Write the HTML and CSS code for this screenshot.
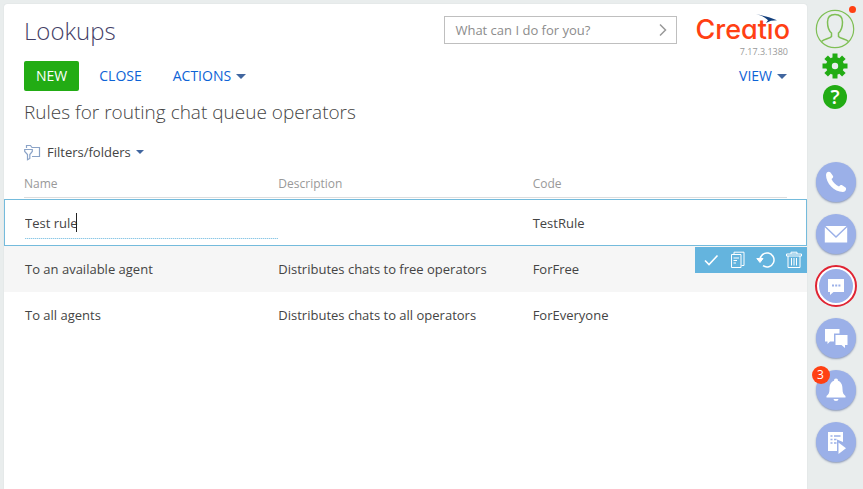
FILE: index.html
```html
<!DOCTYPE html>
<html lang="en">
<head>
<meta charset="utf-8">
<title>Lookups</title>
<link rel="stylesheet" href="styles.css">
</head>
<body>
<div class="app">
  <main class="card">
    <header class="top">
      <h1 class="title">Lookups</h1>
      <form class="command">
        <input class="command-input" type="text" placeholder="What can I do for you?" aria-label="Command line">
        <button class="command-go" type="button" aria-label="Run command">
          <svg width="10" height="14" viewBox="0 0 10 14"><path d="M2 1.5 7.5 7 2 12.5" fill="none" stroke="#999" stroke-width="1.5"/></svg>
        </button>
      </form>
      <div class="brand">
        <span class="logo">Creatio
          <svg class="bird" width="22" height="10" viewBox="0 0 22 10"><path d="M5 3H21V10H11Z" fill="#fff"/><path d="M0 0 13 3.2 21 6.2 15 6.8 10 9 12 6.2C9 3 6 2 0 0Z" fill="#123f7c"/></svg>
        </span>
        <span class="version">7.17.3.1380</span>
      </div>
    </header>
    <div class="toolbar">
      <button class="btn btn-new" type="button">NEW</button>
      <button class="btn" type="button">CLOSE</button>
      <button class="btn btn-actions" type="button">ACTIONS<span class="caret"></span></button>
      <button class="btn btn-view" type="button">VIEW<span class="caret"></span></button>
    </div>
    <h2 class="subtitle">Rules for routing chat queue operators</h2>
    <button class="filters" type="button">
      <svg width="17" height="17" viewBox="0 0 17 17" fill="none" stroke="#8ba3c7" stroke-width="1.2"><path d="M2.5 4V1.5H6.5L8 3.5H15.5V12.5H8"/><path d="M.7 5.5H8.3V7.5L5.8 10.5V14.5L3.5 15.8V10.5L.7 7.5Z" fill="#fff"/></svg>
      <span>Filters/folders</span><span class="caret"></span>
    </button>
    <table class="grid">
      <thead><tr><th>Name</th><th>Description</th><th>Code</th></tr></thead>
      <tbody>
        <tr class="editing">
          <td class="edit-cell"><input class="edit-input" type="text" value="Test rule" aria-label="Name"></td>
          <td></td>
          <td>TestRule
            <div class="row-actions">
              <button type="button" aria-label="Save"><svg width="18" height="18" viewBox="0 0 18 18"><path d="M3 9.5 7 13.5 15.5 4.5" stroke-width="1.6"/></svg></button>
              <button type="button" aria-label="Copy"><svg width="18" height="18" viewBox="0 0 18 18"><path d="M2.5 3.5H12V16.5H2.5ZM5 3V1.2H15V14.5H12.5M4.5 7H10M4.5 9.5H8M4.5 12H7"/></svg></button>
              <button type="button" aria-label="Undo"><svg width="20" height="18" viewBox="0 0 20 18"><path d="M4 9A7 7 0 1 1 7 14.7" stroke-width="1.5"/><path d="M.8 7.5H7L4 11.5Z" fill="#fff"/></svg></button>
              <button type="button" aria-label="Delete"><svg width="18" height="18" viewBox="0 0 18 18"><path d="M1.5 5V3H16.5V5ZM6 3V1.2H12V3M3 5V16.5H15V5M6.5 7V14.5M9 7V14.5M11.5 7V14.5"/></svg></button>
            </div>
          </td>
        </tr>
        <tr class="striped"><td>To an available agent</td><td>Distributes chats to free operators</td><td>ForFree</td></tr>
        <tr><td>To all agents</td><td>Distributes chats to all operators</td><td>ForEveryone</td></tr>
      </tbody>
    </table>
  </main>
  <aside class="side">
    <button class="plain avatar" type="button" aria-label="Profile">
      <svg width="40" height="40" viewBox="0 0 40 40" fill="none" stroke="#7fbf55" stroke-width="1.2"><circle cx="20" cy="20" r="18.7"/><path d="M6.5 32.5C9 30 15 29.5 16.5 27.5V24C13.5 21.5 12.5 17 12.5 13C12.5 8 15.5 5.5 20 5.5S27.500 8 27.500 13C27.500 17 26.500 21.500 23.500 24V27.500C25 29.500 31 30 33.500 32.500" stroke-width="1.500"/></svg>
      <span class="dot"></span>
    </button>
    <button class="plain gear" type="button" aria-label="Settings">
      <svg width="26" height="26" viewBox="-13 -13 26 26" fill="#22ac14"><g id="teeth"><path d="M-2.500-12.500H2.500V12.500H-2.500Z"/><path d="M-12.500-2.500H12.500V2.500H-12.500Z"/></g><use href="#teeth" transform="rotate(45)"/><circle r="9"/><circle r="3.200" fill="#e9eded"/></svg>
    </button>
    <button class="plain help" type="button" aria-label="Help">?</button>
    <nav class="channels">
      <button class="round" type="button" aria-label="Calls"><svg width="24" height="24" viewBox="0 0 24 24"><path d="M2 5C2 2 5 .8 6.500 2.500L9 6C9.500 7 9 8 7.500 9C9 12.500 12 15 15 16.500C16 15 17 14.500 18.200 15.200L21.500 17.500C23 18.800 21.500 22 19 22C10 22 2 13 2 5Z"/></svg></button>
      <button class="round" type="button" aria-label="Email"><svg width="24" height="24" viewBox="0 0 24 24"><path d="M1.500 4H22.500L12 14ZM.8 5.300 12 16 23.200 5.300V20.500H.8Z"/></svg></button>
      <button class="round ringed" type="button" aria-label="Chats"><svg width="24" height="24" viewBox="0 0 24 24"><path d="M4 5H20V18H9.500L6 21V18H4Z"/><path d="M8 10.500H10V12.500H8ZM11.200 10.500H13.200V12.500H11.200ZM14.400 10.500H16.400V12.500H14.400Z" fill="#9bb0e8"/></svg></button>
      <button class="round" type="button" aria-label="Feed"><svg width="26" height="24" viewBox="0 0 26 24"><path d="M2 3H16.500V7.500H11V15.500H7L4.500 18V15.500H2Z"/><path d="M12.500 9H24.500V19H22V22L18.500 19H12.500Z"/></svg></button>
      <button class="round" type="button" aria-label="Notifications"><svg width="24" height="26" viewBox="0 0 24 26"><path d="M12 1.500A2 2 0 0 1 14 3.700C17.500 5 18.500 8 18.500 12C18.500 16 19.500 17.500 21.500 19V20.500H2.500V19C4.500 17.500 5.500 16 5.500 12C5.500 8 6.500 5 10 3.700A2 2 0 0 1 12 1.500ZM9.500 22H14.500A2.500 2 0 0 1 9.500 22Z"/></svg><span class="badge">3</span></button>
      <button class="round" type="button" aria-label="Processes"><svg width="24" height="24" viewBox="0 0 24 24"><path d="M4 2H19V12L13 9.500V21H4Z"/><path d="M6.500 6H8.500M10 6H16.500M6.500 9.500H8.500M10 9.500H12.500M6.500 13H8.500M10 13H12.500" stroke="#9bb0e8" stroke-width="1.300"/><path d="M14.500 12.500 22 18.300 14.500 24Z"/></svg></button>
    </nav>
  </aside>
</div>
</body>
</html>
```
FILE: styles.css
```css
* { box-sizing: border-box; }
body {
  margin: 0;
  background: #e9eded;
  color: #444;
  font: 13px/20px "Open Sans", sans-serif;
}
button, input { font: inherit; color: inherit; border: 0; padding: 0; background: none; }
button { cursor: pointer; }
svg { display: block; flex: none; }
h1, h2 { margin: 0; font-weight: 300; }

.app { display: flex; min-height: 100vh; padding: 4px 0 0 4px; }
.card { flex: 1; min-width: 0; background: #fff; border-radius: 3px 3px 0 0; box-shadow: 0 0 1px #c4cacc; }

.top { display: flex; align-items: flex-start; height: 56px; padding: 10px 17px 0 20px; }
.title { font-size: 24px; line-height: 34px; color: #444066; }
.command { display: flex; align-items: center; width: 233px; height: 28px; margin: 2px 18px 0 auto; border: 1px solid #bfbfbf; }
.command-input { flex: 1; min-width: 0; height: 26px; padding-left: 10px; outline: 0; }
.command-input::placeholder { color: #8c8c8c; opacity: 1; }
.command-go { padding: 0 8px; }
.brand { display: flex; flex-direction: column; align-items: flex-end; }
.logo { position: relative; font: 500 27px/32px Inter, sans-serif; font-feature-settings: "cv11"; color: #ff4013; }
.bird { position: absolute; right: 12px; top: 0; }
.version { font-size: 9px; line-height: 12px; color: #999; padding-right: 2px; }

.toolbar { display: flex; align-items: center; padding: 0 20px; height: 32px; font-size: 14px; }
.btn { height: 30px; color: #0d63d6; display: flex; align-items: center; }
.btn-new { padding: 0 12px; margin-right: 20px; background: #22ac14; color: #fff; border-radius: 2px; font-weight: 500; }
.btn-actions { margin-left: 31px; }
.btn-view { margin-left: auto; }
.caret { margin-left: 5px; border: 5px solid transparent; border-top-color: #41669f; border-bottom: 0; }
.filters .caret { border-width: 4px 4px 0; }

.subtitle { padding: 7px 20px 0; font-size: 19px; line-height: 26px; }
.filters { display: flex; align-items: center; margin: 12px 20px 0; height: 30px; }
.filters svg { margin-right: 6px; }

.grid { display: block; }
.grid thead, .grid tbody { display: block; }
.grid tr { display: grid; grid-template-columns: repeat(3, 1fr); padding: 0 20px; position: relative; }
.grid th { padding: 8px 0 4px; border-bottom: 1px solid #ddd; color: #999; font-size: 12px; font-weight: 400; line-height: 18px; text-align: left; }
.grid td { padding: 13px 0; }
.grid td:first-child { padding-left: 1px; }
.grid .editing { height: 47px; margin-top: 1px; border: 1px solid #74bbdc; padding: 0 19px; }
.edit-cell { position: relative; }
.edit-input {
  display: block;
  width: 100%;
  height: 28px;
  margin-top: -3px;
  padding-bottom: 4px;
  outline: 0;
  background: repeating-linear-gradient(90deg, #8cc8e6 0 1px, #d6ebf6 1px 2px) bottom / 100% 1px no-repeat;
}
.grid .edit-cell { padding-top: 14px; }
.edit-cell::after { content: ""; position: absolute; left: 52px; top: 13px; width: 1px; height: 19px; background: #222; }
.striped { background: #f6f6f6; }
.row-actions { position: absolute; right: -1px; top: 47px; z-index: 1; display: flex; align-items: center; justify-content: space-between; width: 112px; height: 26px; padding: 0 4px 0 7px; background: #64b4de; }
.row-actions svg { fill: none; stroke: #fff; stroke-width: 1; }

.side { width: 56px; display: flex; flex-direction: column; align-items: center; padding-top: 5px; }
.plain { position: relative; }
.dot { position: absolute; right: -1px; top: -3px; width: 7px; height: 7px; border-radius: 50%; background: #ff4013; }
.gear { margin-top: 4px; }
.help { width: 24px; height: 24px; margin-top: 6px; border-radius: 50%; background: #22ac14; color: #fff; font-size: 20px; font-weight: 600; line-height: 24px; }
.channels { display: flex; flex-direction: column; gap: 12px; margin-top: 53px; padding-left: 1px; }
.round { position: relative; display: flex; align-items: center; justify-content: center; width: 40px; height: 40px; border-radius: 50%; background: #9bb0e8; box-shadow: 0 1px 2px #8b98b5; }
.round svg { fill: #fff; }
.ringed { border: 2px solid #fff; outline: 2px solid #e02433; outline-offset: -1px; box-shadow: none; border-width: 3px; }
.badge { position: absolute; left: -4px; top: -4px; width: 18px; height: 18px; border-radius: 50%; background: #ff4013; color: #fff; font-size: 12px; line-height: 18px; }
```
